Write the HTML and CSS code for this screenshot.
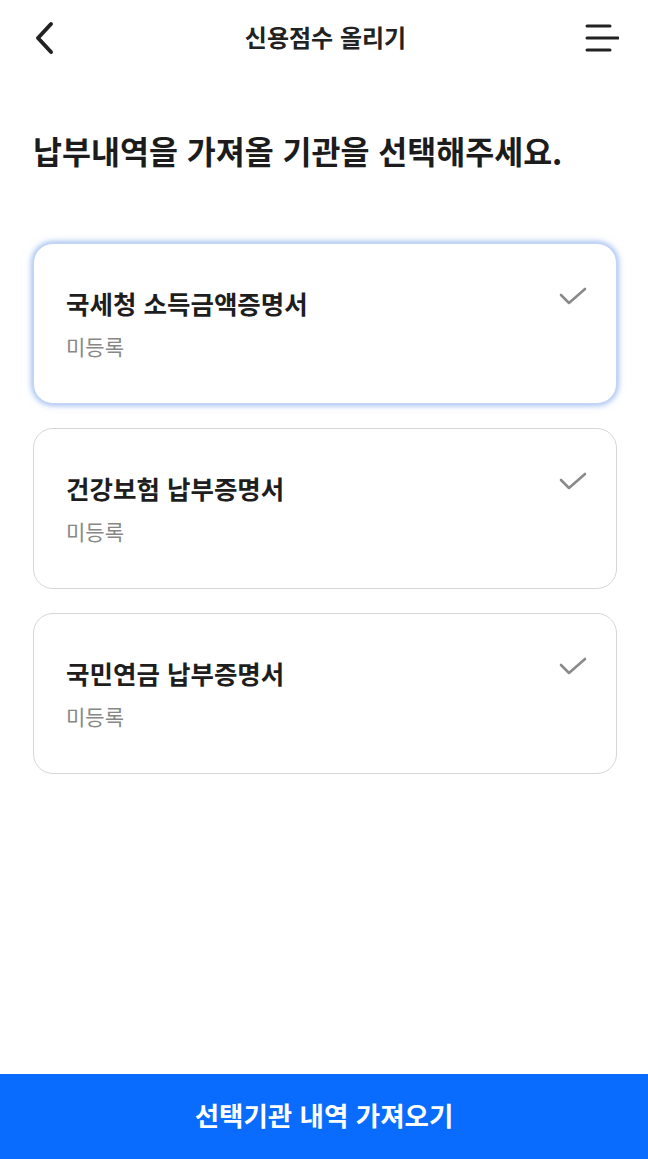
FILE: index.html
```html
<!DOCTYPE html>
<html lang="ko">
<head>
<meta charset="utf-8">
<title>신용점수 올리기</title>
<link rel="stylesheet" href="styles.css">
</head>
<body>
<div class="page">
  <header class="topbar">
    <button class="icon-btn back" aria-label="뒤로">
      <svg width="24" height="34" viewBox="0 0 24 34"><path d="M19 3 L6 17 L19 31" fill="none" stroke="#222" stroke-width="4" stroke-linecap="round" stroke-linejoin="round"/></svg>
    </button>
    <h1 class="topbar-title">신용점수 올리기</h1>
    <button class="icon-btn menu" aria-label="메뉴">
      <svg width="34" height="30" viewBox="0 0 34 30"><g stroke="#222" stroke-width="3" stroke-linecap="round"><line x1="2" y1="3" x2="25" y2="3"/><line x1="2" y1="15" x2="33" y2="15"/><line x1="2" y1="27" x2="25" y2="27"/></g></svg>
    </button>
  </header>

  <main class="content">
    <h2 class="heading">납부내역을 가져올 기관을 선택해주세요.</h2>
    <ul class="card-list">
      <li class="card selected">
        <div class="card-text">
          <div class="card-title">국세청 소득금액증명서</div>
          <div class="card-sub">미등록</div>
        </div>
        <svg class="check" width="28" height="18" viewBox="0 0 28 18"><path d="M2 8 L10 16 L26 2" fill="none" stroke="#8a8a8a" stroke-width="2.6" stroke-linecap="round" stroke-linejoin="round"/></svg>
      </li>
      <li class="card">
        <div class="card-text">
          <div class="card-title">건강보험 납부증명서</div>
          <div class="card-sub">미등록</div>
        </div>
        <svg class="check" width="28" height="18" viewBox="0 0 28 18"><path d="M2 8 L10 16 L26 2" fill="none" stroke="#8a8a8a" stroke-width="2.6" stroke-linecap="round" stroke-linejoin="round"/></svg>
      </li>
      <li class="card">
        <div class="card-text">
          <div class="card-title">국민연금 납부증명서</div>
          <div class="card-sub">미등록</div>
        </div>
        <svg class="check" width="28" height="18" viewBox="0 0 28 18"><path d="M2 8 L10 16 L26 2" fill="none" stroke="#8a8a8a" stroke-width="2.6" stroke-linecap="round" stroke-linejoin="round"/></svg>
      </li>
    </ul>
  </main>

  <button class="cta">선택기관 내역 가져오기</button>
</div>
</body>
</html>
```

FILE: styles.css
```css
* { box-sizing: border-box; }
html, body { margin: 0; padding: 0; background: #fff; }
body {
  font-family: "Noto Sans CJK KR", "Noto Sans", sans-serif;
  color: #1e1e1e;
}
.page {
  width: 648px;
  height: 1159px;
  display: flex;
  flex-direction: column;
}
.topbar {
  height: 76px;
  display: flex;
  align-items: center;
  justify-content: space-between;
  padding: 0 29px 0 32px;
}
.icon-btn {
  border: 0;
  background: none;
  padding: 0;
  display: flex;
  align-items: center;
}
.back { width: 34px; }
.menu { width: 34px; justify-content: flex-start; }
.topbar-title {
  margin: 0 0 2px;
  font-size: 24px;
  line-height: 32px;
  font-weight: 700;
  color: #222;
}
.content {
  flex: 1;
  padding: 0 31px 0 33px;
}
.heading {
  margin: 54px 0 0;
  font-size: 31.5px;
  line-height: 40px;
  font-weight: 700;
  color: #1c1c1c;
}
.card-list {
  list-style: none;
  margin: 73px 0 0;
  padding: 0;
  display: flex;
  flex-direction: column;
  gap: 24px;
}
.card {
  height: 161px;
  border: 1px solid #d6d6d6;
  border-radius: 20px;
  padding: 40px 29px 0 32px;
  display: flex;
  justify-content: space-between;
  align-items: flex-start;
  background: #fff;
}
.card.selected {
  border-color: #c3d4f6;
  box-shadow: 0 0 4px 2px rgba(120, 160, 235, 0.45), 0 0 10px rgba(120, 160, 235, 0.35);
}
.card-text { padding-top: 2px; }
.card-title {
  font-size: 25.5px;
  line-height: 34px;
  font-weight: 700;
  color: #1e1e1e;
}
.card-sub {
  margin-top: 12px;
  font-size: 21px;
  line-height: 28px;
  color: #878787;
}
.check { display: block; margin-top: 3px; }
.cta {
  height: 85px;
  width: 100%;
  border: 0;
  background: #0a6cff;
  color: #fff;
  font-family: "Noto Sans CJK KR", "Noto Sans", sans-serif;
  font-size: 26.5px;
  font-weight: 700;
  padding: 0 0 4px;
}
```
